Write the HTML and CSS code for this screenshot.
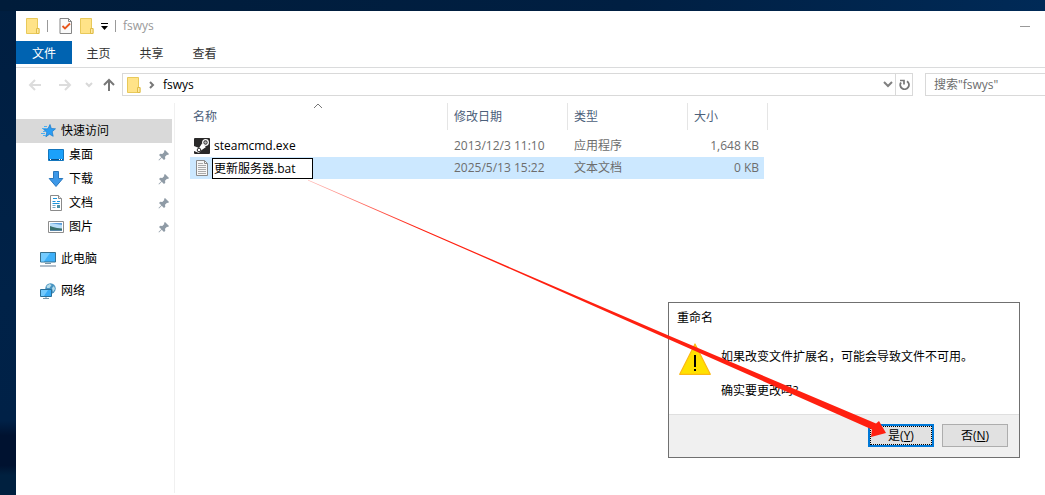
FILE: index.html
```
<!DOCTYPE html>
<html lang="zh-CN">
<head>
	<meta charset="UTF-8">
	<title>fswys</title>
	<link rel="stylesheet" href="styles.css">
</head>
<body>
	<svg class="defs" aria-hidden="true">
		<symbol id="folder" viewBox="0 0 14 16">
			<path d="M.5.5h11v10h1.500v5H.5z" fill="#ffe388" stroke="#e8c95a"/>
			<path d="M10.500 10.500h2.500v5h-2.500z" fill="#ffe9a3" stroke="#e0bd48"/>
		</symbol>
		<symbol id="pin" viewBox="0 0 12 12">
			<path d="M7 1l4 4-1 1-1-.3-2 2 .3 2-1.300 1.300-2.300-2.300L1 11.500.500 11l2.800-2.700L1 6l1.300-1.300 2 .3 2-2L6 2z" fill="#8f9ba6"/>
		</symbol>
	</svg>
	<div class="window">
		<div class="titlebar">
			<svg class="folder" width="14" height="16"><use href="#folder"/></svg>
			<span class="sep"></span>
			<button class="tool check" aria-label="属性">
				<svg width="14" height="16" viewBox="0 0 14 16"><path d="M1 .5h8.500l3 3v12H1z" fill="#fafafa" stroke="#858585"/><path d="M9.500.5v3h3" fill="none" stroke="#858585"/><path d="M3.500 8l2.500 2.500 5-5" fill="none" stroke="#e8561c" stroke-width="1.800"/></svg>
			</button>
			<button class="tool" aria-label="新建文件夹"><svg width="14" height="16"><use href="#folder"/></svg></button>
			<button class="tool" aria-label="自定义"><svg width="7" height="8" viewBox="0 0 7 8"><path d="M0 1h7v1H0zM0 4h7L3.500 8z" fill="#000"/></svg></button>
			<span class="sep"></span>
			<span class="title">fswys</span>
			<button class="tool min" aria-label="最小化"></button>
		</div>
		<nav class="tabs">
			<a href="#" class="active">文件</a>
			<a href="#">主页</a>
			<a href="#">共享</a>
			<a href="#">查看</a>
		</nav>
		<div class="navbar">
			<button class="nav" aria-label="后退"><svg width="14" height="12" viewBox="0 0 14 12"><path d="M13 6H2M7 1L2 6l5 5" stroke="#dcdcdc" stroke-width="2" fill="none"/></svg></button>
			<button class="nav" aria-label="前进"><svg width="14" height="12" viewBox="0 0 14 12"><path d="M1 6h11M7 1l5 5-5 5" stroke="#dcdcdc" stroke-width="2" fill="none"/></svg></button>
			<button class="nav recent" aria-label="最近"><svg width="8" height="6" viewBox="0 0 8 6"><path d="M1 1l3 3 3-3" stroke="#d8d8d8" stroke-width="2" fill="none"/></svg></button>
			<button class="nav up" aria-label="向上"><svg width="12" height="13" viewBox="0 0 12 13"><path d="M6 13V2M1 7l5-5 5 5" stroke="#777" stroke-width="2" fill="none"/></svg></button>
			<div class="address">
				<svg width="14" height="16"><use href="#folder"/></svg>
				<svg width="6" height="8" viewBox="0 0 6 8"><path d="M1 1l3 3-3 3" stroke="#777" stroke-width="2" fill="none"/></svg>
				<span class="path">fswys</span>
				<button class="drop" aria-label="历史记录"><svg width="10" height="7" viewBox="0 0 10 7"><path d="M1 1l4 4 4-4" stroke="#808080" stroke-width="2" fill="none"/></svg></button>
				<button class="refresh" aria-label="刷新"><svg width="11" height="12" viewBox="0 0 11 12"><path d="M8 2.300A4.300 4.300 0 1 1 2 3.500" stroke="#777" stroke-width="1.900" fill="none"/><path d="M1 1.500h4v4" stroke="#777" stroke-width="1.700" fill="none"/></svg></button>
			</div>
			<input class="search" type="text" placeholder="搜索&quot;fswys&quot;" aria-label="搜索">
		</div>
		<div class="content">
			<ul class="side">
				<li class="root active">
					<svg width="16" height="16" viewBox="0 0 16 16"><path d="M10 1.500l1.300 4 4.200.3-3.300 2.900 1 4.600-3.700-2.100-3.600 2.600.9-4.400L3.500 6.200l4.500-.5z" fill="#2a9df4" stroke="#1878c8" stroke-width=".7"/><path d="M4 3.500h3M2 5.500h4M3 8.500h2M1 10.500h4M3 12.500h3" stroke="#4bb0f2"/></svg>
					<a href="#">快速访问</a>
				</li>
				<li>
					<svg width="16" height="16" viewBox="0 0 16 16"><path d="M.5 2.500h15v11H.5z" fill="#1ba1fa" stroke="#1476bd"/><path d="M1 12.500h14" stroke="#0b4f86"/><path d="M2 12.500h1M11 12.500h1M13 12.500h1" stroke="#fff"/></svg>
					<a href="#">桌面</a>
					<svg class="pin" width="12" height="12"><use href="#pin"/></svg>
				</li>
				<li>
					<svg width="16" height="16" viewBox="0 0 16 16"><path d="M5.500.5h5v7h4.300L8 15.500 1.200 7.500h4.300z" fill="#3d98e8" stroke="#2877bd"/></svg>
					<a href="#">下载</a>
					<svg class="pin" width="12" height="12"><use href="#pin"/></svg>
				</li>
				<li>
					<svg width="16" height="16" viewBox="0 0 16 16"><path d="M2.500.5h8l3 3v12h-11z" fill="#fff" stroke="#8a8a8a"/><path d="M10.500.5v3h3" fill="#eee" stroke="#8a8a8a"/><path d="M5 3.500h4M4.500 6.500h3M9 6.500h3M4.500 8.500h7" stroke="#1b94dc"/><path d="M4.500 10.500h3M4.500 12.500h3" stroke="#76a8c5"/><path d="M9 10h3v3H9z" fill="#4c91a8"/></svg>
					<a href="#">文档</a>
					<svg class="pin" width="12" height="12"><use href="#pin"/></svg>
				</li>
				<li>
					<svg width="16" height="16" viewBox="0 0 16 16"><path d="M.5 2.500h15v11H.5z" fill="#fff" stroke="#8d8d8d"/><path d="M2 4h12v8H2z" fill="#b8ddf8"/><path d="M2 4h12v2L8 5z" fill="#5d9eda"/><path d="M2 7l3 1 4 1 5 .5V12H2z" fill="#39706b"/><path d="M2 11h12v1H2z" fill="#5887a8"/></svg>
					<a href="#">图片</a>
					<svg class="pin" width="12" height="12"><use href="#pin"/></svg>
				</li>
				<li class="root group">
					<svg width="16" height="16" viewBox="0 0 16 16"><path d="M.5 1.500h15v9.500H.5z" fill="#3eb0f9" stroke="#35708f"/><path d="M1 2h9L4 10.500H1z" fill="#73cbff"/><path d="M5 12.500h6" stroke="#7896a8"/><path d="M0 15h16" stroke="#98a8b8" stroke-width="1.500"/></svg>
					<a href="#">此电脑</a>
				</li>
				<li class="root group">
					<svg width="16" height="16" viewBox="0 0 16 16"><circle cx="10.500" cy="5.500" r="5.200" fill="#4793c0"/><path d="M6.500 3l3-2 2 1-2 3H7zM12 5l2-2 1 3-2 3z" fill="#b6dcea"/><path d="M.5 6.500h11v7H.5z" fill="#38aaf4" stroke="#2a6f98"/><path d="M1 7h7l-4 6H1z" fill="#72c9fc"/><path d="M3 15.500h6M6 14v1" stroke="#7896a8"/></svg>
					<a href="#">网络</a>
				</li>
			</ul>
			<div class="list">
				<table>
					<thead>
						<tr>
							<th class="name">名称<svg class="sort" width="10" height="6" viewBox="0 0 10 6"><path d="M1 5l4-4 4 4" stroke="#777" fill="none"/></svg></th>
							<th class="date">修改日期</th>
							<th class="type">类型</th>
							<th class="size">大小</th>
						</tr>
					</thead>
					<tbody>
						<tr>
							<td>
								<div class="file">
									<svg width="16" height="16" viewBox="0 0 16 16"><rect width="16" height="16" rx="1" fill="#2a2929"/><path d="M0 8l5 2 3-4.500 4 3.500-5 3.500-2 2.500-5-2z" fill="#fff"/><circle cx="11.500" cy="4.500" r="2.800" fill="#2a2929" stroke="#fff" stroke-width="1.300"/><circle cx="11.500" cy="4.500" r="1.300" fill="#bbb"/><circle cx="5" cy="12" r="1.800" fill="#fff" stroke="#2a2929"/></svg>
									<span>steamcmd.exe</span>
								</div>
							</td>
							<td>2013/12/3 11:10</td>
							<td>应用程序</td>
							<td class="num">1,648 KB</td>
						</tr>
						<tr class="selected">
							<td>
								<div class="file">
									<svg width="16" height="16" viewBox="0 0 16 16"><path d="M2.500.5h8l3 3v12h-11z" fill="#f6f6f6" stroke="#8b8b8b"/><path d="M10.500.5v3h3" fill="none" stroke="#8b8b8b"/><path d="M4 3.500h5M4 5.500h8M4 7.500h8M4 9.500h8M4 11.500h8M4 13.500h8" stroke="#aaa"/></svg>
									<input class="rename" type="text" value="更新服务器.bat" aria-label="文件名">
								</div>
							</td>
							<td>2025/5/13 15:22</td>
							<td>文本文档</td>
							<td class="num">0 KB</td>
						</tr>
					</tbody>
				</table>
			</div>
		</div>
	</div>

	<div class="dialog" role="dialog" aria-labelledby="dialog-title">
		<div class="dialog-title" id="dialog-title">重命名</div>
		<div class="dialog-body">
			<svg width="32" height="32" viewBox="0 0 32 32"><path d="M16 1l15.300 30.300H.7z" fill="#ffe100" stroke="#fdb813" stroke-width="1.200" stroke-linejoin="round"/><path d="M16 12v12M16 26v2" stroke="#000" stroke-width="2"/></svg>
			<div class="message">
				<p>如果改变文件扩展名，可能会导致文件不可用。</p>
				<p>确实要更改吗?</p>
			</div>
		</div>
		<div class="dialog-foot">
			<button class="btn default">是(<u>Y</u>)</button>
			<button class="btn">否(<u>N</u>)</button>
		</div>
	</div>

	<!-- 红色箭头：从文件名指向“是” -->
	<svg class="arrow" width="1045" height="495" viewBox="0 0 1045 495" aria-hidden="true">
		<linearGradient id="fade" gradientUnits="userSpaceOnUse" x1="308" y1="180" x2="420" y2="229">
			<stop offset="0" stop-color="#ff2010" stop-opacity=".3"/>
			<stop offset="1" stop-color="#ff2010"/>
		</linearGradient>
		<path d="M308 179.800L488 257.800 668 335.300 876 423.500l3-2.500 7 12-15 4 1-7.500L668 338.900 488 259.200 308 180.500z" fill="url(#fade)"/>
	</svg>
</body>
</html>
```
FILE: styles.css
```
*{box-sizing: border-box;}
html{height: 100%;}
body{margin: 0; min-height: 100%; padding: 11px 0 0 16px; position: relative; overflow: hidden; display: flex; font: 12px/16px "Open Sans", "Noto Sans CJK SC", sans-serif; color: #000; background: linear-gradient(#001e40, #002248 60%, #002147 85%, #001230 88%, #001230 94%, #00203f 96%);}
body:before{content: ''; position: absolute; left: 0; right: 0; top: 0; height: 11px; background: linear-gradient(90deg, #001c3a, #001f42 60%, #002a57);}
ul,p{margin: 0; padding: 0; list-style: none;}
a{color: inherit; text-decoration: none;}
button,input{font: inherit; color: inherit; border: 0; padding: 0; margin: 0; background: none; outline: none; border-radius: 0;}
svg{display: block; flex: none;}
.defs{position: absolute; width: 0; height: 0;}

.window{flex: 1; min-width: 0; background: #fff;}
.titlebar{display: flex; align-items: center; gap: 7px; height: 30px; padding: 0 15px 0 10px; color: #999;}
.tool{display: flex;}
.check{margin-left: 4px;}
.sep{width: 1px; height: 12px; background: #999;}
.min{margin-left: auto; width: 10px; height: 1px; background: #999;}

.tabs{display: flex; height: 27px; border-bottom: 1px solid #dadbdc; color: #333;}
.tabs a{width: 53px; height: 23px; line-height: 25px; text-align: center;}
.tabs .active{width: 56px; background: #0063b1; color: #fff;}

.navbar{display: flex; align-items: center; height: 33px; padding-left: 4px;}
.nav{display: flex; justify-content: center; width: 30px;}
.recent{width: 18px;}
.up{width: 22px;}
.address{flex: 1; display: flex; align-items: center; height: 23px; margin: 0 12px 0 2px; padding-left: 4px; gap: 8px; border: 1px solid #d9d9d9;}
.path{flex: 1;}
.refresh,.drop{display: flex; align-items: center; justify-content: center;}
.refresh{width: 17px; height: 21px; border-left: 1px solid #d9d9d9; margin-left: -6px;}
.search{width: 120px; height: 23px; padding-left: 8px; border: 1px solid #d9d9d9; border-right: 0;}
.search::placeholder{color: #6d6d6d; opacity: 1;}

.content{display: flex; padding-top: 2px; min-height: 392px;}
.side{width: 159px; padding: 16px 2px 0 0; border-right: 1px solid #f0f0f0; flex: none;}
.side li{display: flex; align-items: center; gap: 5px; height: 24px; padding: 0 2px 0 32px;}
.side .root{padding-left: 24px;}
.side .active{background: #d9d9d9;}
.side .group{margin-top: 8px;}
.pin{margin-left: auto;}

.list{padding-left: 15px;}
table{width: 578px; table-layout: fixed; border-spacing: 0;}
th{position: relative; height: 27px; padding: 0 6px; border-right: 1px solid #e5e5e5; font-weight: normal; text-align: left; color: #4c607a;}
.name{width: 258px; padding-left: 3px;}
.date,.type{width: 120px;}
.size{width: 80px;}
.sort{position: absolute; left: 50%; top: 0; margin-left: -6px;}
tbody:before{content: ''; display: block; height: 5px;}
td{height: 22px; padding: 0 6px; color: #6d6d6d; white-space: nowrap;}
td:first-child{padding: 0 4px; color: #000;}
td:last-child{border-right: 4px solid transparent; background-clip: padding-box;}
.num{padding-right: 5px; text-align: right;}
.selected td{background-color: #cce8ff;}
.file{display: flex; align-items: center; gap: 4px;}
.selected .file{gap: 2px;}
.rename{width: 101px; height: 21px; padding: 0 1px; border: 1px solid #000; background: #fff;}

.dialog{position: absolute; right: 25px; top: 302px; width: 352px; border: 1px solid #707070; background: #fff;}
.dialog-title{padding: 7px 8px;}
.dialog-body{display: flex; gap: 10px; padding: 10px 10px 15px;}
.message{padding-top: 6px;}
.message p{padding-bottom: 18px;}
.message p:last-child{padding-bottom: 0;}
.dialog-foot{display: flex; justify-content: flex-end; gap: 8px; padding: 9px 11px 10px; border-top: 1px solid #dfdfdf; background: #f0f0f0;}
.btn{width: 66px; height: 23px; border: 1px solid #adadad; background: #e1e1e1;}
.default{border: 2px solid #0078d7; outline: 1px dotted #000; outline-offset: -3px;}
.arrow{position: absolute; left: 0; top: 0; pointer-events: none;}
```
